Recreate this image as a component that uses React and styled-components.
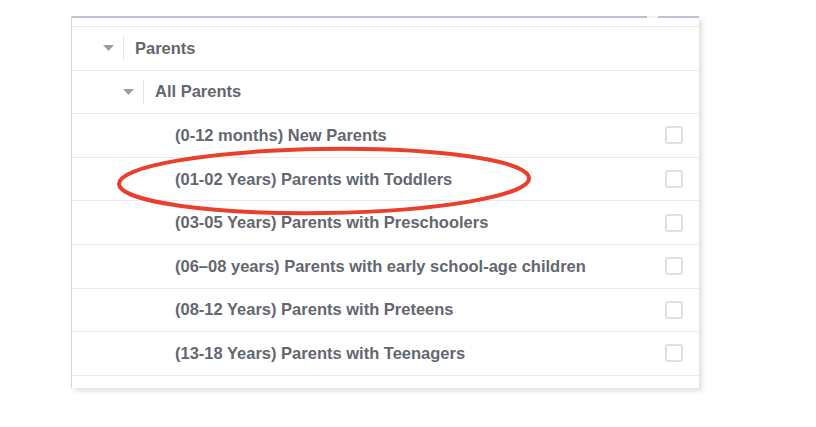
import React from "react";
import styled, { createGlobalStyle } from "styled-components";

const Global = createGlobalStyle`
  html, body { margin: 0; padding: 0; background: #ffffff; }
  body { font-family: "Liberation Sans", Arial, sans-serif; }
`;

const Page = styled.div`
  width: 816px;
  height: 427px;
  padding: 16px 0 0 71px;
  box-sizing: border-box;
  position: relative;
`;

const Panel = styled.div`
  position: relative;
  width: 628px;
  background: #fff;
  border-top: 2px solid #bcc2d3;
  border-left: 1px solid #d8d9dc;
  box-shadow: 3px 3px 5px rgba(0, 0, 0, 0.13);
  padding-top: 8px;
  padding-bottom: 12px;
  box-sizing: border-box;
`;

const Notch = styled.span`
  position: absolute;
  top: -2px;
  left: 575px;
  width: 11px;
  height: 2px;
  background: #f4f4f6;
`;

const List = styled.div`
  border-top: 1px solid #e9eaed;
`;

const Row = styled.div`
  display: flex;
  align-items: center;
  height: 43.6px;
  box-sizing: border-box;
  border-bottom: 1px solid #e9eaed;
  padding-left: ${(p) => p.indent}px;
  padding-right: 16px;
`;

const Caret = styled.svg`
  width: 11px;
  height: 6px;
  flex: none;
`;

const Divider = styled.span`
  width: 1px;
  height: 24px;
  background: #e3e4e7;
  margin: 0 11px 0 9px;
  flex: none;
`;

const Label = styled.span`
  flex: 1;
  font-size: 16.5px;
  font-weight: bold;
  color: #63676f;
  white-space: nowrap;
`;

const Check = styled.span`
  width: 18px;
  height: 18px;
  box-sizing: border-box;
  border: 2px solid #dfe0e4;
  border-radius: 3px;
  flex: none;
`;

const Ring = styled.svg`
  position: absolute;
  left: 112px;
  top: 143px;
  width: 424px;
  height: 76px;
  pointer-events: none;
`;

const items = [
  "(0-12 months) New Parents",
  "(01-02 Years) Parents with Toddlers",
  "(03-05 Years) Parents with Preschoolers",
  "(06–08 years) Parents with early school-age children",
  "(08-12 Years) Parents with Preteens",
  "(13-18 Years) Parents with Teenagers",
];

const Tri = () => (
  <Caret viewBox="0 0 11 6">
    <path d="M0 0 H11 L5.5 6 Z" fill="#9a9ea6" />
  </Caret>
);

export default function App() {
  return (
    <>
      <Global />
      <Page>
        <Panel>
          <Notch />
          <List>
            <Row indent={31}>
              <Tri />
              <Divider />
              <Label>Parents</Label>
            </Row>
            <Row indent={51}>
              <Tri />
              <Divider />
              <Label>All Parents</Label>
            </Row>
            {items.map((t) => (
              <Row key={t} indent={103}>
                <Label>{t}</Label>
                <Check />
              </Row>
            ))}
          </List>
        </Panel>
        <Ring viewBox="0 0 424 76">
          <ellipse
            cx="212"
            cy="38"
            rx="205"
            ry="32"
            fill="none"
            stroke="#e8402c"
            strokeWidth="4"
            transform="rotate(-0.8 212 38)"
          />
        </Ring>
      </Page>
    </>
  );
}
